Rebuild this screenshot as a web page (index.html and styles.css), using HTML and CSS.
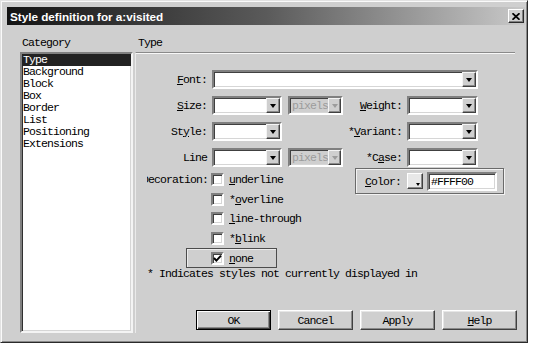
FILE: index.html
```html
<!DOCTYPE html>
<html>
<head>
<meta charset="utf-8">
<link rel="stylesheet" href="styles.css">
</head>
<body>
<div class="window">
  <div class="titlebar">
    <span class="title">Style definition for a:visited</span>
    <span class="close"><svg width="8" height="7" viewBox="0 0 8 7"><path d="M0.5 0.2 L7.5 6.8 M7.5 0.2 L0.5 6.8" stroke="#000" stroke-width="1.7" fill="none"/></svg></span>
  </div>
  <div class="main">
    <div class="left">
      <div class="cap">Category</div>
      <ul class="list">
        <li class="sel">Type</li>
        <li>Background</li>
        <li>Block</li>
        <li>Box</li>
        <li>Border</li>
        <li>List</li>
        <li>Positioning</li>
        <li>Extensions</li>
      </ul>
    </div>
    <div class="right">
      <div class="cap heading">Type</div>
      <div class="panel">
        <div class="grid">
          <span class="lbl"><u>F</u>ont:</span>
          <span class="combo font"><span class="txt"></span><span class="drop"><i class="arr"></i></span></span>

          <span class="lbl"><u>S</u>ize:</span>
          <span class="combo small"><span class="txt"></span><span class="drop"><i class="arr"></i></span></span>
          <span class="combo unit dis"><span class="txt">pixels</span><span class="drop"><i class="arr"></i></span></span>
          <span class="lbl"><u>W</u>eight:</span>
          <span class="combo rsel"><span class="txt"></span><span class="drop"><i class="arr"></i></span></span>

          <span class="lbl">St<u>y</u>le:</span>
          <span class="combo small"><span class="txt"></span><span class="drop"><i class="arr"></i></span></span>
          <span></span>
          <span class="lbl">*<u>V</u>ariant:</span>
          <span class="combo rsel"><span class="txt"></span><span class="drop"><i class="arr"></i></span></span>

          <span class="lbl">Line</span>
          <span class="combo small"><span class="txt"></span><span class="drop"><i class="arr"></i></span></span>
          <span class="combo unit dis"><span class="txt">pixels</span><span class="drop"><i class="arr"></i></span></span>
          <span class="lbl">*C<u>a</u>se:</span>
          <span class="combo rsel"><span class="txt"></span><span class="drop"><i class="arr"></i></span></span>
        </div>

        <div class="deco">
          <div class="dlabel"><span>Decoration:</span></div>
          <div class="checks">
            <div class="chk"><span class="box"></span><span><u>u</u>nderline</span></div>
            <div class="chk"><span class="box"></span><span>*<u>o</u>verline</span></div>
            <div class="chk"><span class="box"></span><span><u>l</u>ine-through</span></div>
            <div class="chk"><span class="box"></span><span>*<u>b</u>link</span></div>
            <div class="chk none"><span class="box"><svg width="9" height="9" viewBox="0 0 9 9"><path d="M1 4 L3.4 6.6 L8 1.6" stroke="#000" stroke-width="2" fill="none"/></svg></span><span><u>n</u>one</span></div>
          </div>
          <div class="colorgrp">
            <span class="clabel"><u>C</u>olor:</span>
            <span class="swatch"><i class="sarr"></i></span>
            <span class="cinput">#FFFF00</span>
          </div>
        </div>

        <div class="note">* Indicates styles not currently displayed in</div>

        <div class="buttons">
          <span class="btn def">OK</span>
          <span class="btn">Cancel</span>
          <span class="btn">Apply</span>
          <span class="btn"><u>H</u>elp</span>
        </div>
      </div>
    </div>
  </div>
</div>
</body>
</html>
```

FILE: styles.css
```css
* { box-sizing: border-box; }
html, body { margin: 0; padding: 0; background: #fff; }
body {
  font-family: "Liberation Mono", monospace;
  font-size: 11.5px;
  letter-spacing: -0.9px;
  color: #000;
}
u { text-underline-offset: 1px; }

.window {
  width: 528px;
  height: 343px;
  background: #cfcfcf;
  border: 1px solid;
  border-color: #e2e2e2 #2a2a2a #2a2a2a #e2e2e2;
  box-shadow: inset 1px 1px #fafafa, inset -1px -1px #8a8a8a;
}

.titlebar {
  margin: 6px 2px 0 6px;
  height: 18px;
  background: linear-gradient(to right, #141414 0%, #5a5a5a 50%, #c9c9c9 100%);
  display: flex;
  align-items: center;
  justify-content: space-between;
  padding: 0 1px 0 3px;
}
.title {
  font-family: "Liberation Sans", Arial, sans-serif;
  font-weight: bold;
  font-size: 11.7px;
  letter-spacing: 0;
  color: #fff;
}
.close {
  width: 16px;
  height: 14px;
  background: #cfcfcf;
  border: 1px solid;
  border-color: #fff #2a2a2a #2a2a2a #fff;
  box-shadow: inset -1px -1px #808080;
  display: flex;
  align-items: center;
  justify-content: center;
}
.close svg { display: block; }

.main {
  display: flex;
  margin-top: 11px;
  padding-left: 19px;
}
.left { width: 113px; }
.cap {
  height: 14px;
  line-height: 14px;
  padding-left: 2px;
  margin-bottom: 2px;
  white-space: nowrap;
}
.list {
  list-style: none;
  margin: 0;
  padding: 0;
  width: 113px;
  height: 281px;
  background: #fff;
  border: 2px solid;
  border-color: #808080 #f4f4f4 #f4f4f4 #808080;
  box-shadow: inset 1px 1px #303030, inset -1px -1px #d6d6d6;
}
.list li {
  height: 12px;
  line-height: 12px;
  padding-left: 1px;
  white-space: nowrap;
}
.list li.sel { background: #222; color: #fff; }

.right { width: 380px; margin-left: 2px; }
.heading { padding-left: 3px; }
.panel {
  height: 281px;
  border-top: 1px solid #8a8a8a;
  border-left: 1px solid #eaeaea;
  box-shadow: inset 0 1px #f8f8f8;
}

.grid {
  display: grid;
  grid-template-columns: 76px 76px 55px 64px 71px;
  grid-auto-rows: 19px;
  row-gap: 7px;
  margin-top: 17px;
  align-items: center;
}
.lbl {
  text-align: right;
  padding-right: 5px;
  white-space: nowrap;
  line-height: 12px;
}

.combo {
  display: flex;
  justify-content: space-between;
  height: 19px;
  background: #fff;
  border: 2px solid;
  border-color: #808080 #fff #fff #808080;
  box-shadow: inset 1px 1px #404040, inset -1px -1px #d6d6d6;
}
.combo.font { grid-column: 2 / 6; }
.combo.small { width: 70px; }
.combo.unit { width: 55px; }
.combo.rsel { width: 71px; }
.combo .txt {
  padding-left: 2px;
  line-height: 15px;
  white-space: nowrap;
}
.combo.dis { background: #cfcfcf; }
.combo.dis .txt { color: #9c9c9c; }
.drop {
  width: 14px;
  height: 15px;
  background: #cfcfcf;
  border: 1px solid;
  border-color: #f4f4f4 #404040 #404040 #f4f4f4;
  box-shadow: inset -1px -1px #8a8a8a;
  display: flex;
  align-items: center;
  justify-content: center;
}
.arr {
  display: block;
  width: 1px;
  height: 0;
  border-top: 4px solid #000;
  border-left: 3px solid transparent;
  border-right: 3px solid transparent;
}
.dis .arr { border-top-color: #9c9c9c; }

.deco {
  display: flex;
  margin-top: 3px;
}
.dlabel {
  margin-left: 11px;
  width: 61px;
  height: 19.5px;
  overflow: hidden;
  display: flex;
  justify-content: flex-end;
  align-items: center;
  white-space: nowrap;
}
.checks {
  margin-left: 3px;
  width: 144px;
}
.chk {
  display: flex;
  align-items: center;
  gap: 5px;
  height: 19.5px;
  white-space: nowrap;
}
.box {
  width: 13px;
  height: 13px;
  flex: none;
  background: #fff;
  border: 2px solid;
  border-color: #808080 #fff #fff #808080;
  box-shadow: inset 1px 1px #404040, inset -1px -1px #d6d6d6;
  display: flex;
  align-items: center;
  justify-content: center;
}
.box svg { display: block; }
.chk.none {
  margin-left: -25px;
  width: 91px;
  height: 20px;
  padding-left: 24px;
  border: 1px solid #4c4c4c;
  box-shadow: inset 1px 1px #ececec;
}

.colorgrp {
  align-self: flex-start;
  margin-top: -2px;
  width: 149px;
  height: 26px;
  border: 1px solid #6a6a6a;
  box-shadow: inset 1px 1px #f2f2f2, 1px 1px #f2f2f2;
  display: flex;
  align-items: center;
  padding-left: 9px;
}
.clabel { width: 36px; margin-right: 6px; white-space: nowrap; }
.swatch {
  position: relative;
  width: 16px;
  height: 16px;
  margin-right: 4px;
  background: #e8e8e8;
  border: 1px solid;
  border-color: #fff #404040 #404040 #fff;
  box-shadow: inset -1px -1px #8a8a8a;
}
.sarr {
  position: absolute;
  right: 2px;
  bottom: 2px;
  width: 1px;
  height: 0;
  border-top: 3px solid #000;
  border-left: 2px solid transparent;
  border-right: 2px solid transparent;
}
.cinput {
  width: 70px;
  height: 19px;
  background: #fff;
  border: 2px solid;
  border-color: #808080 #fff #fff #808080;
  box-shadow: inset 1px 1px #404040, inset -1px -1px #d6d6d6;
  padding-left: 2px;
  line-height: 15px;
  white-space: nowrap;
}

.note {
  margin-left: 11px;
  height: 12px;
  line-height: 12px;
  white-space: nowrap;
}

.buttons {
  display: flex;
  gap: 7px;
  margin-top: 30px;
  margin-left: 60px;
}
.btn {
  width: 75px;
  height: 20px;
  flex: none;
  display: flex;
  align-items: center;
  justify-content: center;
  background: #cfcfcf;
  border: 1px solid;
  border-color: #fff #404040 #404040 #fff;
  box-shadow: inset -1px -1px #8a8a8a, inset 1px 1px #e6e6e6;
}
.btn.def {
  border-color: #000;
  box-shadow: inset 1px 1px #fff, inset -1px -1px #404040, inset -2px -2px #8a8a8a;
}
```
